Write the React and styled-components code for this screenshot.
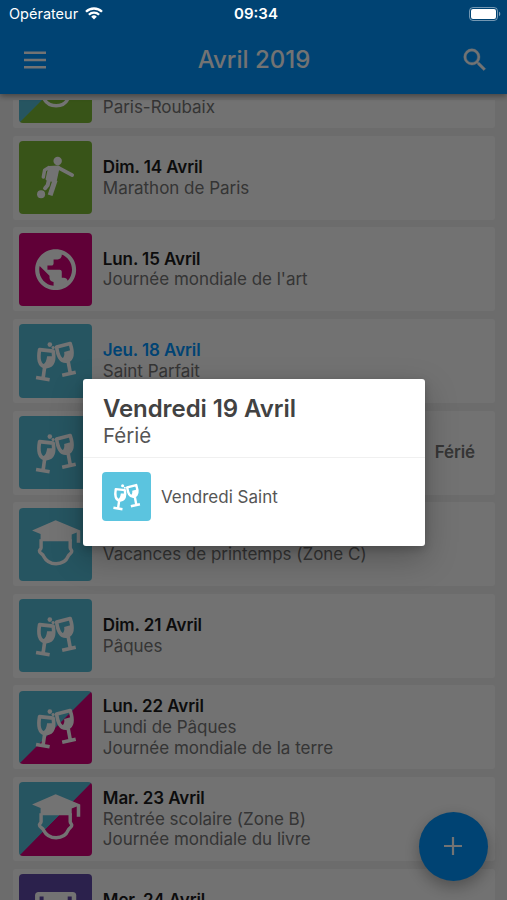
import React from 'react';
import styled, { createGlobalStyle, css } from 'styled-components';

const GlobalStyle = createGlobalStyle`
  *, *::before, *::after { box-sizing: border-box; }
  body { margin: 0; background: #eeeeee; font-family: Inter, 'Liberation Sans', sans-serif; }
`;

const CYAN = '#56bdd8';
const PINK = '#d5007a';
const GREEN = '#7dbb35';
const PURPLE = '#6149a8';

const Screen = styled.div`
  position: relative;
  display: flex;
  flex-direction: column;
  width: 507px;
  height: 900px;
  overflow: hidden;
  background: #f0f0f0;
`;

const Header = styled.header`
  position: relative;
  z-index: 1;
  flex: none;
  height: 94px;
  padding: 26px 17px 0 23px;
  display: grid;
  grid-template-columns: 60px 1fr 60px;
  align-items: center;
  background: #0095ff;
  color: #fff;
  box-shadow: 0 2px 6px rgba(0, 0, 0, 0.4);
  svg:last-child { justify-self: end; }
`;

const Title = styled.h1`
  margin: 0 5px 0 0;
  text-align: center;
  font-size: 24px;
  line-height: 30px;
  font-weight: 500;
  letter-spacing: 0;
`;

const List = styled.main`
  flex: 1;
  min-height: 0;
  margin-top: 6px;
  overflow: hidden;
  padding: 0 12px 0 13px;
`;

const Cards = styled.div`
  display: flex;
  flex-direction: column;
  gap: 7.6px;
  margin-top: -55.8px;
`;

const Card = styled.article`
  flex: none;
  height: 84px;
  padding: 0 20px 0 6px;
  display: flex;
  align-items: center;
  border-radius: 3px;
  background: #fdfdfd;
`;

const Tile = styled.div`
  flex: none;
  width: ${(p) => p.$size}px;
  height: ${(p) => p.$size}px;
  border-radius: 4px;
  overflow: hidden;
  background: ${(p) =>
    p.$second
      ? `linear-gradient(to bottom right, ${p.$color} 49.7%, ${p.$second} 50.3%)`
      : p.$color};
  svg { display: block; width: 100%; height: 100%; }
`;

const Copy = styled.div`
  flex: 1;
  margin-left: 10.5px;
  white-space: nowrap;
`;

const line = css`
  font-size: 17px;
  line-height: 20.8px;
`;

const DateLine = styled.h2`
  ${line}
  margin: 0;
  font-weight: 600;
  letter-spacing: -0.1px;
  color: ${(p) => (p.$today ? '#0095ff' : '#1c1c1c')};
`;

const EventLine = styled.p`
  ${line}
  margin: 0;
  color: #757575;
  letter-spacing: -0.02px;
`;

const Tag = styled.span`
  font-size: 17px;
  font-weight: 600;
  letter-spacing: -0.15px;
  color: #757575;
  transform: translateY(-1px);
`;

const Fab = styled.button`
  position: absolute;
  right: 19.5px;
  bottom: 19.5px;
  width: 69px;
  height: 69px;
  border: 0;
  padding: 0;
  border-radius: 50%;
  display: grid;
  place-items: center;
  background: #0095ff;
  box-shadow: 0 6px 16px rgba(0, 0, 0, 0.3);
`;

const Backdrop = styled.div`
  position: absolute;
  inset: 0;
  z-index: 2;
  display: flex;
  justify-content: center;
  align-items: center;
  padding-top: 25px;
  background: rgba(0, 0, 0, 0.55);
`;

const StatusBar = styled.div`
  position: absolute;
  inset: 0 0 auto;
  z-index: 3;
  height: 27px;
  padding: 0 6px 0 9px;
  display: grid;
  grid-template-columns: 1fr auto 1fr;
  align-items: center;
  color: #fff;
  font-size: 14.5px;
`;

const Carrier = styled.span`
  display: flex;
  align-items: center;
  gap: 7px;
`;

const Clock = styled.span`
  padding-left: 2px;
  font-size: 15px;
  font-weight: 600;
`;

const Battery = styled.svg`
  justify-self: end;
`;

const Dialog = styled.section`
  width: 342px;
  height: 167px;
  margin-left: 1px;
  border-radius: 3px;
  background: #fff;
  box-shadow: 0 12px 32px rgba(0, 0, 0, 0.26), 0 3px 8px rgba(0, 0, 0, 0.18);
`;

const DialogHead = styled.div`
  height: 79px;
  padding: 16px 20px 0;
  border-bottom: 1px solid #f0f0f0;
`;

const DialogTitle = styled.h3`
  margin: 0;
  font-size: 24px;
  line-height: 28px;
  font-weight: 600;
  letter-spacing: -0.08px;
  color: #424242;
`;

const DialogSub = styled.p`
  margin: 0;
  font-size: 20.5px;
  line-height: 26px;
  color: #555;
`;

const DialogRow = styled.div`
  display: flex;
  align-items: center;
  gap: 10px;
  padding: 14px 19px;
  font-size: 17px;
  color: #555;
`;

const Glasses = () => (
  <svg viewBox="0 0 73 73" stroke="#fff" strokeLinejoin="round">
    <g strokeWidth="3.600" fill="none">
      <path d="M20.500 25.500 34 27c1.500 8 .5 15-7 15.500-7.500-.5-8-8.500-6.500-17Z" />
      <path d="M37.500 23 51 19.500c2.500 7.500 3.500 15-3 17.500-7 1-9.500-6-10.500-14Z" />
      <path d="M25.500 43 24 54M17 53.300l13.500 2.200M49 37.500 51 48.500M43 51l13.500-3" />
    </g>
    <g fill="#fff" stroke="none">
      <path d="M28 32h6.500c.5 6-1.500 10-7 10.500-2 0-3.500-1-3.500-2.500 2.500-1 3.500-4 4-8Z" />
      <path d="m45 28 7-2c1.500 6 .5 10.500-4 11.500-2.500.5-5-.5-5.500-2.500 2.500-1.500 3-4 2.500-7Z" />
      <circle cx="30.700" cy="20.500" r="2.300" />
      <circle cx="34" cy="23.500" r="1.600" />
    </g>
  </svg>
);

const Graduate = () => (
  <svg viewBox="0 0 73 73" fill="#fff">
    <path d="M13 22.500 36.500 12.300 61 22.500V34.500h-3.500V24.500l-5 2v6.500h-31v-7Z" />
    <path d="M22 31v8.500c0 2-2.500 2-1.500 4 .5 2 3 2 4 4.500 2.500 5 7 7.500 12.500 7.500s10-2.500 12-7.500c1-2.500 3-2.500 3.500-4.500.5-2-1.500-2-1.500-4V31" fill="none" stroke="#fff" strokeWidth="3.400" strokeLinejoin="round" />
  </svg>
);

const Footballer = () => (
  <svg viewBox="0 0 73 73" fill="none" stroke="#fff" strokeLinecap="round" strokeLinejoin="round">
    <circle cx="38.500" cy="20" r="4.200" fill="#fff" stroke="none" />
    <path d="m30.500 26.500 8.500-.500-3 14-8-2Z" fill="#fff" strokeWidth="3" />
    <path d="m39 26.500 14 7.500" strokeWidth="3.600" />
    <path d="M29.500 26.500 25.500 29 24.200 36" strokeWidth="3.400" />
    <path d="m36 39-5 15" strokeWidth="5" strokeLinecap="butt" />
    <path d="m30 38-1.500 6-2.500 3" strokeWidth="4" />
    <circle cx="22" cy="53" r="4" fill="#fff" stroke="none" />
  </svg>
);

const Globe = () => (
  <svg viewBox="0 0 73 73">
    <path
      transform="translate(12 12) scale(2.040)"
      fill="#fff"
      d="M12 2C6.480 2 2 6.480 2 12s4.480 10 10 10 10-4.480 10-10S17.520 2 12 2zm-1 17.930c-3.950-.490-7-3.850-7-7.930 0-.620.080-1.210.210-1.790L9 15v1c0 1.100.900 2 2 2v1.930zm6.900-2.540c-.260-.810-1-1.390-1.900-1.390h-1v-3c0-.550-.450-1-1-1H8v-2h2c.550 0 1-.450 1-1V7h2c1.100 0 2-.900 2-2v-.410c2.930 1.190 5 4.060 5 7.410 0 2.080-.800 3.970-2.100 5.390z"
    />
  </svg>
);

const Film = () => (
  <svg viewBox="0 0 73 73">
    <rect x="16" y="18" width="41" height="38" rx="3.500" fill="#fff" />
    <path d="M20.500 22.500h4v4h-4zM48.500 22.500h4v4h-4zM20.500 32h4v5h-4zM48.500 32h4v5h-4z" fill={PURPLE} />
  </svg>
);

const icons = { glasses: Glasses, graduate: Graduate, footballer: Footballer, globe: Globe, film: Film };

const days = [
  { date: 'Sam. 13 Avril', events: ['Vacances de printemps', 'Paris-Roubaix'], icon: 'graduate', color: CYAN, second: GREEN },
  { date: 'Dim. 14 Avril', events: ['Marathon de Paris'], icon: 'footballer', color: GREEN },
  { date: 'Lun. 15 Avril', events: ["Journée mondiale de l'art"], icon: 'globe', color: PINK },
  { date: 'Jeu. 18 Avril', events: ['Saint Parfait'], icon: 'glasses', color: CYAN, today: true },
  { date: 'Ven. 19 Avril', events: ['Vendredi Saint'], icon: 'glasses', color: CYAN, tag: 'Férié' },
  { date: 'Sam. 20 Avril', events: ['Vacances de printemps (Zone C)'], icon: 'graduate', color: CYAN },
  { date: 'Dim. 21 Avril', events: ['Pâques'], icon: 'glasses', color: CYAN },
  { date: 'Lun. 22 Avril', events: ['Lundi de Pâques', 'Journée mondiale de la terre'], icon: 'glasses', color: CYAN, second: PINK },
  { date: 'Mar. 23 Avril', events: ['Rentrée scolaire (Zone B)', 'Journée mondiale du livre'], icon: 'graduate', color: CYAN, second: PINK },
  { date: 'Mer. 24 Avril', events: ['Sortie cinéma'], icon: 'film', color: PURPLE },
];

function DayCard({ day }) {
  const Icon = icons[day.icon];
  return (
    <Card>
      <Tile $size={73.3} $color={day.color} $second={day.second}><Icon /></Tile>
      <Copy>
        <DateLine $today={day.today}>{day.date}</DateLine>
        {day.events.map((e) => <EventLine key={e}>{e}</EventLine>)}
      </Copy>
      {day.tag && <Tag>{day.tag}</Tag>}
    </Card>
  );
}

export default function App() {
  return (
    <Screen>
      <GlobalStyle />
      <Header>
        <svg width="24" height="18" viewBox="0 0 24 18" stroke="#fff" strokeWidth="2.400">
          <path d="M1 1.700h22M1 9h22M1 16.300h22" />
        </svg>
        <Title>Avril 2019</Title>
        <svg width="30" height="30" viewBox="0 0 24 24" fill="#fff" stroke="#fff" strokeWidth=".3">
          <path d="M15.500 14h-.790l-.280-.270A6.471 6.471 0 0 0 16 9.500 6.500 6.500 0 1 0 9.500 16c1.610 0 3.090-.590 4.230-1.570l.270.280v.790l5 4.990L20.490 19l-4.990-5zm-6 0C7.010 14 5 11.990 5 9.500S7.010 5 9.500 5 14 7.010 14 9.500 11.990 14 9.500 14z" />
        </svg>
      </Header>
      <List>
        <Cards>{days.map((d) => <DayCard key={d.date} day={d} />)}</Cards>
      </List>
      <Fab aria-label="Ajouter">
        <svg width="18" height="18" viewBox="0 0 18 18" stroke="#fff" strokeWidth="2.200"><path d="M9 0v18M0 9h18" /></svg>
      </Fab>
      <Backdrop>
        <Dialog role="dialog">
          <DialogHead>
            <DialogTitle>Vendredi 19 Avril</DialogTitle>
            <DialogSub>Férié</DialogSub>
          </DialogHead>
          <DialogRow>
            <Tile $size={49} $color="#5bc4df"><Glasses /></Tile>
            <span>Vendredi Saint</span>
          </DialogRow>
        </Dialog>
      </Backdrop>
      <StatusBar>
        <Carrier>
          Opérateur
          <svg width="18" height="13" viewBox="0 0 18 13" fill="none" stroke="#fff" strokeWidth="2.300">
            <path d="M1 4.800a11.300 11.300 0 0 1 16 0M3.900 7.800a7.200 7.200 0 0 1 10.200 0" />
            <path d="M9 12.500 6.200 9.700a4 4 0 0 1 5.600 0Z" fill="#fff" stroke="none" />
          </svg>
        </Carrier>
        <Clock>09:34</Clock>
        <Battery width="32" height="14" viewBox="0 0 32 14">
          <rect x=".5" y=".5" width="28" height="13" rx="3.500" fill="none" stroke="#fff" strokeOpacity=".45" />
          <rect x="2" y="2" width="25" height="10" rx="2" fill="#fff" />
          <path d="M30 4.800c1.700.5 1.700 3.900 0 4.400z" fill="#fff" fillOpacity=".5" />
        </Battery>
      </StatusBar>
    </Screen>
  );
}
